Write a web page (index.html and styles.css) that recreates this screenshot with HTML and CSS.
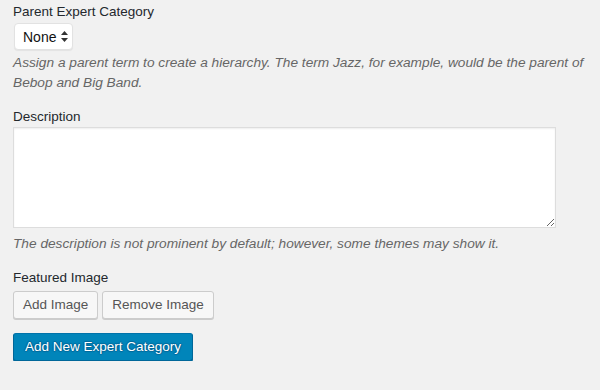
FILE: index.html
```html
<!DOCTYPE html>
<html>
<head>
<meta charset="utf-8">
<link rel="stylesheet" href="styles.css">
</head>
<body>
<form class="term-form">
  <div class="field">
    <label class="field-label" for="parent">Parent Expert Category</label>
    <span class="select-wrap">
      <select id="parent" class="select"><option>None</option></select>
      <svg class="select-arrows" width="7" height="11" viewBox="0 0 7 11"><path d="M3.5 0 L7 4 L0 4 Z M0 7 L7 7 L3.5 11 Z" fill="#333"/></svg>
    </span>
    <p class="desc">Assign a parent term to create a hierarchy. The term Jazz, for example, would be the parent of Bebop and Big Band.</p>
  </div>
  <div class="field">
    <label class="field-label" for="description">Description</label>
    <textarea id="description" class="textarea"></textarea>
    <p class="desc">The description is not prominent by default; however, some themes may show it.</p>
  </div>
  <div class="field">
    <label class="field-label">Featured Image</label>
    <div class="btn-row">
      <button type="button" class="btn">Add Image</button>
      <button type="button" class="btn">Remove Image</button>
    </div>
  </div>
  <div class="submit-row">
    <button type="button" class="btn btn-primary">Add New Expert Category</button>
  </div>
</form>
</body>
</html>
```

FILE: styles.css
```css
html, body {
  margin: 0;
  padding: 0;
  background: #f1f1f1;
}
body {
  font-family: "Liberation Sans", Arial, sans-serif;
  font-size: 13.5px;
  color: #23282d;
}
.term-form {
  padding: 2px 13px 0 13px;
  width: 574px;
}
.field {
  margin-bottom: 14px;
}
.field-label {
  display: block;
  line-height: 19px;
  margin-bottom: 2px;
}
.select-wrap {
  position: relative;
  display: inline-block;
  vertical-align: top;
  margin-left: 1px;
}
.select {
  -webkit-appearance: none;
  appearance: none;
  display: block;
  box-sizing: border-box;
  width: 59px;
  height: 27px;
  margin: 0;
  padding: 0 0 0 8px;
  border: 1px solid #e2e2e2;
  border-radius: 4px;
  background: #fff;
  box-shadow: 0 1px 1px rgba(0,0,0,0.06);
  font-family: "Liberation Sans", Arial, sans-serif;
  font-size: 14px;
  color: #111;
  outline: none;
}
.select-arrows {
  position: absolute;
  right: 5px;
  top: 8px;
  pointer-events: none;
}
.desc {
  margin: 3px 0 0 0;
  line-height: 20px;
  font-style: italic;
  font-size: 13.7px;
  color: #666;
}
.textarea {
  display: block;
  box-sizing: border-box;
  width: 543px;
  height: 101px;
  margin: -1px 0 0 0;
  padding: 2px 6px;
  border: 1px solid #ddd;
  background: #fff;
  box-shadow: inset 0 1px 2px rgba(0,0,0,0.07);
  font-family: "Liberation Sans", Arial, sans-serif;
  font-size: 13px;
}
.field .textarea + .desc {
  margin-top: 6px;
}
.btn-row {
  display: flex;
  gap: 4px;
  margin-top: 4px;
}
.btn {
  box-sizing: border-box;
  height: 28px;
  margin: 0;
  padding: 0 9px 1px;
  line-height: 26px;
  border: 1px solid #ccc;
  border-radius: 3px;
  background: #f7f7f7;
  box-shadow: 0 1px 0 #ccc;
  color: #555;
  font-family: "Liberation Sans", Arial, sans-serif;
  font-size: 13.5px;
  white-space: nowrap;
  cursor: pointer;
}
.submit-row {
  margin-top: 12px;
}
.btn-primary {
  background: #0085ba;
  border-color: #0073aa #006799 #006799;
  box-shadow: 0 1px 0 #006799;
  color: #fff;
  text-shadow: 0 -1px 1px #006799, 1px 0 1px #006799, 0 1px 1px #006799, -1px 0 1px #006799;
  padding: 0 11px 1px;
}
```
